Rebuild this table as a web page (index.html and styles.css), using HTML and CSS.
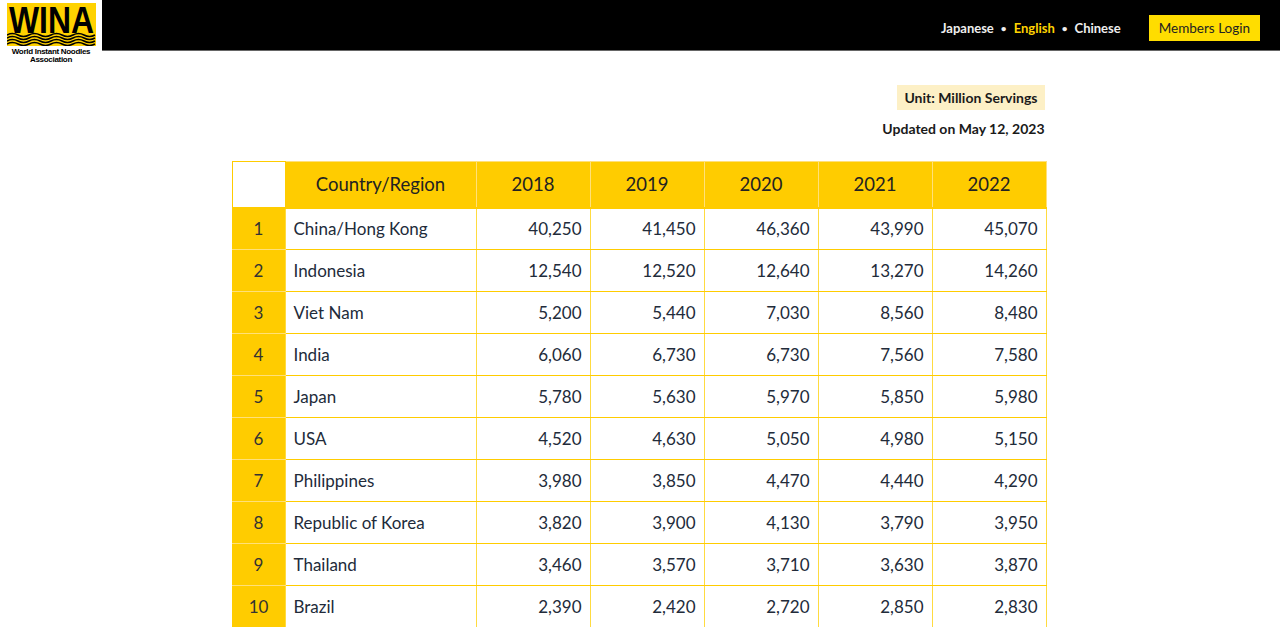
FILE: index.html
```html
<!DOCTYPE html>
<html lang="en">
<head>
<meta charset="utf-8">
<title>WINA - Demand</title>
<link rel="stylesheet" href="styles.css">
</head>
<body>
<header class="topbar">
  <a class="logo" href="#">
    <svg class="logo-mark" width="89" height="43" viewBox="0 0 89 43">
      <rect width="89" height="43" fill="#ffd200"/>
      <text x="2" y="30" font-family="Liberation Sans, Arial, sans-serif" font-weight="700" font-size="37" textLength="85" lengthAdjust="spacingAndGlyphs" fill="#000">WINA</text>
      <g fill="none" stroke="#000" stroke-width="1.5">
        <path d="M0 32 q5.5 -3 11 0 t11 0 t11 0 t11 0 t11 0 t11 0 t11 0 t11 0"/>
        <path d="M0 35 q5.5 -3 11 0 t11 0 t11 0 t11 0 t11 0 t11 0 t11 0 t11 0"/>
        <path d="M0 38 q5.5 -3 11 0 t11 0 t11 0 t11 0 t11 0 t11 0 t11 0 t11 0"/>
        <path d="M0 41 q5.5 -3 11 0 t11 0 t11 0 t11 0 t11 0 t11 0 t11 0 t11 0"/>
      </g>
    </svg>
    <span class="logo-text">World Instant Noodles<br>Association</span>
  </a>
  <nav class="nav">
    <a class="lang" href="#">Japanese</a>
    <span class="dot">•</span>
    <a class="lang active" href="#">English</a>
    <span class="dot">•</span>
    <a class="lang" href="#">Chinese</a>
    <a class="login" href="#">Members Login</a>
  </nav>
</header>

<main class="content">
  <div class="meta">
    <span class="unit">Unit: Million Servings</span>
    <span class="updated">Updated on May 12, 2023</span>
  </div>
  <table class="demand">
    <colgroup>
      <col class="c-rank"><col class="c-country"><col class="c-year"><col class="c-year"><col class="c-year"><col class="c-year"><col class="c-year">
    </colgroup>
    <thead>
      <tr><th class="blank"></th><th>Country/Region</th><th>2018</th><th>2019</th><th>2020</th><th>2021</th><th>2022</th></tr>
    </thead>
    <tbody>
      <tr><td class="rank">1</td><td class="name">China/Hong Kong</td><td>40,250</td><td>41,450</td><td>46,360</td><td>43,990</td><td>45,070</td></tr>
      <tr><td class="rank">2</td><td class="name">Indonesia</td><td>12,540</td><td>12,520</td><td>12,640</td><td>13,270</td><td>14,260</td></tr>
      <tr><td class="rank">3</td><td class="name">Viet Nam</td><td>5,200</td><td>5,440</td><td>7,030</td><td>8,560</td><td>8,480</td></tr>
      <tr><td class="rank">4</td><td class="name">India</td><td>6,060</td><td>6,730</td><td>6,730</td><td>7,560</td><td>7,580</td></tr>
      <tr><td class="rank">5</td><td class="name">Japan</td><td>5,780</td><td>5,630</td><td>5,970</td><td>5,850</td><td>5,980</td></tr>
      <tr><td class="rank">6</td><td class="name">USA</td><td>4,520</td><td>4,630</td><td>5,050</td><td>4,980</td><td>5,150</td></tr>
      <tr><td class="rank">7</td><td class="name">Philippines</td><td>3,980</td><td>3,850</td><td>4,470</td><td>4,440</td><td>4,290</td></tr>
      <tr><td class="rank">8</td><td class="name">Republic of Korea</td><td>3,820</td><td>3,900</td><td>4,130</td><td>3,790</td><td>3,950</td></tr>
      <tr><td class="rank">9</td><td class="name">Thailand</td><td>3,460</td><td>3,570</td><td>3,710</td><td>3,630</td><td>3,870</td></tr>
      <tr><td class="rank">10</td><td class="name">Brazil</td><td>2,390</td><td>2,420</td><td>2,720</td><td>2,850</td><td>2,830</td></tr>
    </tbody>
  </table>
</main>
</body>
</html>
```

FILE: styles.css
```css
* { box-sizing: border-box; }
html, body { margin: 0; padding: 0; }
body {
  background: #fff;
  font-family: "Lato", "Noto Sans", "Liberation Sans", sans-serif;
  color: #222;
}
a { text-decoration: none; }

.topbar {
  height: 51px;
  background: #000;
  border-bottom: 1px solid #666;
  display: flex;
  align-items: flex-start;
  justify-content: space-between;
  position: relative;
}
.logo {
  position: absolute;
  left: 0;
  top: 0;
  width: 102px;
  height: 65px;
  background: #fff;
  display: flex;
  flex-direction: column;
  align-items: center;
  padding-top: 3px;
  z-index: 2;
}
.logo-mark { display: block; flex: none; }
.logo-text {
  font-family: "Liberation Sans", "DejaVu Sans", sans-serif;
  font-weight: 700;
  font-size: 8px;
  line-height: 8px;
  color: #000;
  text-align: center;
  margin-top: 2px;
  letter-spacing: -0.3px;
  white-space: nowrap;
}

.nav {
  margin-left: auto;
  display: flex;
  align-items: center;
  height: 50px;
  padding-top: 6px;
  padding-right: 20px;
  font-family: "Lato", "Noto Sans", sans-serif;
  font-weight: 700;
  font-size: 13px;
}
.lang { color: #eee; }
.lang.active { color: #ffd400; }
.dot { color: #eee; margin: 0 7px; font-size: 10px; }
.login {
  margin-left: 28px;
  background: #ffdd00;
  color: #222;
  font-weight: 400;
  font-size: 13.5px;
  height: 26px;
  padding: 0 10px;
  display: flex;
  align-items: center;
  margin-bottom: 1px;
}

.content {
  width: 813px;
  margin: 0 auto;
  padding-top: 34px;
  position: relative;
  left: -2px;
}
.meta {
  display: flex;
  flex-direction: column;
  align-items: flex-end;
  gap: 10px;
  font-weight: 700;
  font-size: 14px;
  color: #1a1a1a;
}
.unit {
  background: #fdf0c6;
  padding: 4px 7px;
  line-height: 17px;
}
.updated { line-height: 17px; }

.demand {
  margin-top: 24px;
  width: 813px;
  border-collapse: collapse;
  table-layout: fixed;
  font-size: 17px;
  color: #222b3a;
}
.c-rank { width: 53px; }
.c-country { width: 191px; }
.c-year { width: 114px; }
.demand th {
  background: #ffcc00;
  height: 46px;
  font-weight: 400;
  font-size: 18.5px;
  color: #222;
  border: 1px solid #ffe07a;
  border-bottom: 2px solid #ffcc00;
  text-align: center;
}
.demand th.blank { background: #fff; border-color: #ffcc00; border-bottom: 2px solid #ffcc00; }
.demand td {
  height: 42px;
  padding: 0 8px;
  text-align: right;
  border-left: 1px solid #ffdb40;
  border-right: 1px solid #ffdb40;
  border-top: 1px solid #ffcc00;
  border-bottom: 1px solid #ffcc00;
}
.demand td.rank {
  background: #ffcc00;
  text-align: center;
  color: #333;
  border-left: 1px solid #ffcc00;
  border-bottom-color: #ffe07a;
  border-top-color: #ffe07a;
}
.demand td.name { text-align: left; }
```
